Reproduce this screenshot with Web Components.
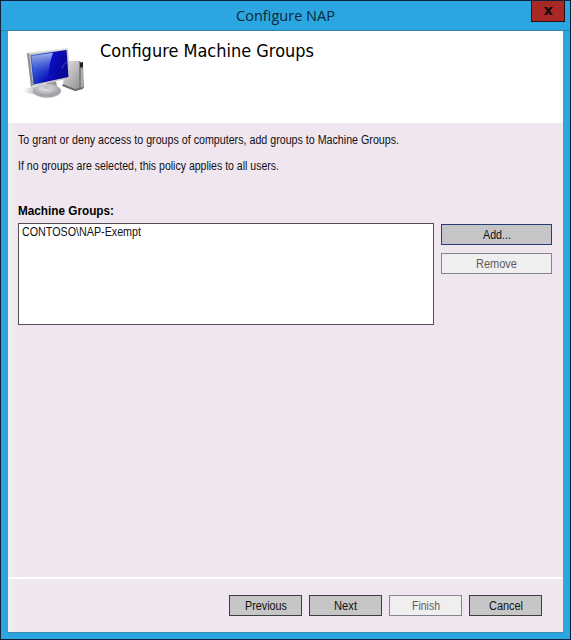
<!DOCTYPE html>
<html lang="en">
<head>
<meta charset="utf-8">
<title>Configure NAP</title>
<style>
html,body{margin:0;width:571px;height:640px;overflow:hidden}
body{font:12px/14px "Liberation Sans",Arial,sans-serif;color:#101014}
</style>
</head>
<body>
<nap-window></nap-window>
<script>
const define = (name, html, ready) => customElements.define(name, class extends HTMLElement {
  connectedCallback() {
    if (this.shadowRoot) return;
    this.attachShadow({mode: 'open'}).innerHTML = html;
    if (ready) ready.call(this, this.shadowRoot);
  }
});

// A single line of text, condensed or widened to the given width.
define('fit-text', `<style>
:host{display:inline-block;white-space:nowrap;text-align:left;vertical-align:top}
span{display:inline-block;transform-origin:0 50%;vertical-align:top}
</style><span><slot></slot></span>`, function (root) {
  const span = root.querySelector('span');
  const width = Number(this.getAttribute('width'));
  const natural = span.getBoundingClientRect().width;
  this.style.width = width + 'px';
  span.style.transform = 'scaleX(' + width / natural + ')';
});

define('push-button', `<style>
:host{display:block;box-sizing:border-box;height:21px;border:1px solid #3f3f43;background:#c6c6c6;text-align:center;line-height:20px}
:host([focused]){border-color:#263f78;background:#c5c5c7}
:host([disabled]){border-color:#86858b;background:#f0eff0;color:#5c5a60}
</style><slot></slot>`);

define('close-button', `<style>
:host{display:block;box-sizing:border-box;width:34px;height:21px;border:1px solid #251014;border-top:0;background:#a82825}
svg{display:block}
</style><svg width="32" height="20" viewBox="0 0 32 20" role="img" aria-label="Close"><path d="M12 6h3l1.500 2.200L18 6h3l-3 4 3 4h-3l-1.500-2.200L15 14h-3l3-4z" fill="#170b0f"/></svg>`);

define('title-bar', `<style>
:host{display:grid;grid-template-columns:1fr auto;height:29px;border-bottom:1px solid #327fa9;box-sizing:content-box;
font:15px/28px "Open Sans","Noto Sans",sans-serif;color:#0d2638}
.title{padding-left:235px}
close-button{margin-right:5px}
</style><div class="title"><slot></slot></div><close-button></close-button>`);

define('computer-icon', `<style>:host{display:block;width:64px;height:54px}svg{display:block}</style>
<svg width="64" height="54" viewBox="0 0 64 54" aria-hidden="true">
<defs>
<linearGradient id="screen" x1="0" y1="0" x2="1" y2=".3"><stop offset="0" stop-color="#4a6cd0"/><stop offset=".35" stop-color="#183bc8"/><stop offset=".6" stop-color="#0a0cc0"/><stop offset="1" stop-color="#0a0896"/></linearGradient>
<linearGradient id="shine" x1="0" y1="0" x2="0" y2="1"><stop offset="0" stop-color="#bccdf5" stop-opacity=".85"/><stop offset="1" stop-color="#1232cc" stop-opacity=".05"/></linearGradient>
<linearGradient id="tower" x1="0" y1="0" x2="1" y2="1"><stop offset="0" stop-color="#e5e5e6"/><stop offset="1" stop-color="#858588"/></linearGradient>
<radialGradient id="foot" cx=".45" cy=".3"><stop offset="0" stop-color="#ededee"/><stop offset="1" stop-color="#a4a4a8"/></radialGradient>
<linearGradient id="shade"><stop offset="0" stop-color="#999" stop-opacity="0"/><stop offset=".5" stop-color="#888" stop-opacity=".8"/><stop offset="1" stop-color="#999" stop-opacity=".1"/></linearGradient>
</defs>
<ellipse cx="18" cy="42.500" rx="17" ry="3.800" fill="url(#shade)"/>
<path d="M43 13l14 0 4 2 1 25-9 3-12-6z" fill="url(#tower)"/>
<path d="M57 13l4 2v25l-4 1z" fill="#818185"/>
<path d="M58 15l3-1v5l-3 .5z" fill="#202023"/>
<path d="M59 21l2-.5V39l-2 .5z" fill="#aaaaaf"/>
<path d="M41 36l12 5 8-2v2l-8 2-13-5z" fill="#6d6d71"/>
<path d="M24 34l10-1 2 10-10 2z" fill="#9b9ba0"/>
<ellipse cx="25" cy="43" rx="14" ry="6.500" fill="url(#foot)" stroke="#b4b4b8" stroke-width=".6"/>
<path d="M21 38q6-3 11-1v3q-5 2-11 1z" fill="#c4c4c9"/>
<path d="M5 5L46 0l2 30-39 9z" fill="#c8c8cd"/>
<path d="M5 5l2 0 4 32-2 2z" fill="#8d8d92"/>
<path d="M6 5L46 .7" fill="none" stroke="#f0f0f0"/>
<path d="M8.500 7.200L44.500 2l2 27-35 7.500z" fill="url(#screen)"/>
<path d="M9.500 8L31 4.800q-5 14-4.500 26.500L12.500 34z" fill="url(#shine)"/>
<path d="M40 21q1-5 5-7" fill="none" stroke="#5162b8" stroke-width=".7"/>
</svg>`);

define('page-header', `<style>
:host{display:flex;box-sizing:border-box;height:92px;background:#fff;padding:17px 0 0 14px;gap:14px}
h1{margin:-7px 0 0;font:17px/21px "DejaVu Sans",sans-serif;color:#000}
</style><computer-icon></computer-icon><h1><slot></slot></h1>`);

define('list-box', `<style>
:host{display:block;box-sizing:border-box;width:416px;height:102px;border:1px solid #505055;background:#fff;padding:1px 3px}
</style><slot></slot>`);

define('group-form', `<style>
:host{display:block;box-sizing:border-box;height:454px;padding:10px 11px 0 10px}
p{margin:0 0 12px;height:14px}
h2{margin:31px 0 5px;font-size:12px;line-height:14px;font-weight:bold;height:14px;color:#000}
.row{display:grid;grid-template-columns:416px 111px;gap:7px}
.actions{display:grid;gap:8px;align-content:start;padding-top:1px}
</style>
<p><fit-text width="381">To grant or deny access to groups of computers, add groups to Machine Groups.</fit-text></p>
<p><fit-text width="261">If no groups are selected, this policy applies to all users.</fit-text></p>
<h2><fit-text width="96">Machine Groups:</fit-text></h2>
<div class="row">
<list-box><fit-text width="119">CONTOSO\\NAP-Exempt</fit-text></list-box>
<div class="actions"><push-button focused><fit-text width="28">Add...</fit-text></push-button><push-button disabled><fit-text width="41">Remove</fit-text></push-button></div>
</div>`);

define('wizard-footer', `<style>
:host{display:flex;box-sizing:border-box;height:55px;border-top:2px solid #fff;padding:16px 21px 0 0;justify-content:flex-end;gap:7px}
push-button{width:73px}
</style>
<push-button><fit-text width="42">Previous</fit-text></push-button>
<push-button><fit-text width="23">Next</fit-text></push-button>
<push-button disabled><fit-text width="28">Finish</fit-text></push-button>
<push-button><fit-text width="34">Cancel</fit-text></push-button>`);

define('nap-window', `<style>
:host{display:block;box-sizing:border-box;width:571px;height:640px;border:1px solid #10213d;background:#2ca6e0}
.client{margin:0 7px;width:555px;height:601px;background:linear-gradient(90deg,#f0eff1 0 2px,#efe8f5 7px,#f0e6ef 9px 553px,#f0eef0 555px);box-shadow:0 1px #3a8db8}
</style>
<title-bar><fit-text width="99">Configure NAP</fit-text></title-bar>
<div class="client">
<page-header><fit-text width="214">Configure Machine Groups</fit-text></page-header>
<group-form></group-form>
<wizard-footer></wizard-footer>
</div>`);
</script>
</body>
</html>
